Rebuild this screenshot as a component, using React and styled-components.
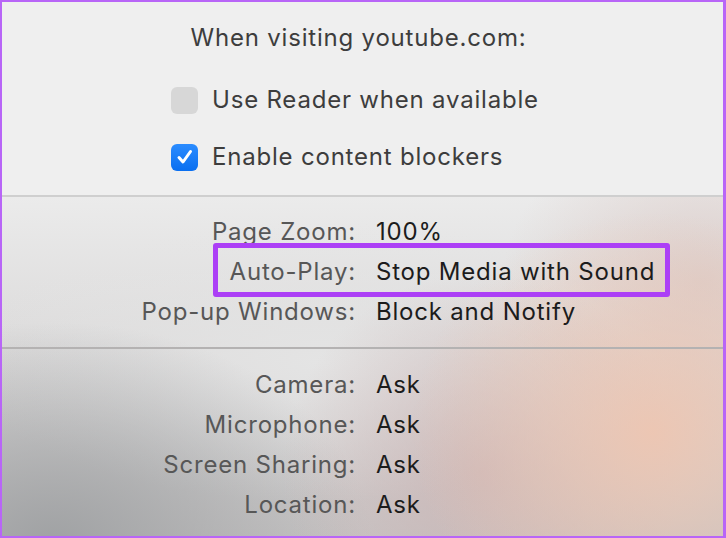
import React from "react";
import styled, { createGlobalStyle } from "styled-components";

const GlobalStyle = createGlobalStyle`
  html, body {
    margin: 0;
    padding: 0;
    background: #ffffff;
  }
  body {
    font-family: Inter, "Noto Sans", "Liberation Sans", sans-serif;
  }
`;

const Panel = styled.div`
  width: 726px;
  height: 538px;
  box-sizing: border-box;
  border: 2px solid #b865f7;
  border-right-width: 3px;
  display: flex;
  flex-direction: column;
  overflow: hidden;
  background:
    radial-gradient(ellipse 240px 220px at 650px 430px, rgba(238, 198, 178, 0.95), rgba(238, 198, 178, 0) 100%),
    radial-gradient(ellipse 200px 200px at 480px 470px, rgba(204, 180, 180, 0.8), rgba(204, 180, 180, 0) 100%),
    radial-gradient(ellipse 200px 160px at 700px 280px, rgba(218, 200, 196, 0.8), rgba(218, 200, 196, 0) 100%),
    radial-gradient(ellipse 320px 220px at 50px 540px, rgba(158, 160, 162, 0.95), rgba(158, 160, 162, 0) 100%),
    radial-gradient(ellipse 360px 140px at 320px 360px, rgba(228, 228, 228, 1), rgba(228, 228, 228, 0) 100%),
    linear-gradient(180deg, #efefef 0px, #ebebeb 195px, #dcdbdb 340px, #c6c4c4 538px);
`;

const Top = styled.div`
  background: #efefef;
  display: flex;
  flex-direction: column;
  align-items: center;
  padding-top: 21px;
  height: 193px;
  box-sizing: border-box;
`;

const Heading = styled.div`
  font-size: 24px;
  letter-spacing: 0.8px;
  color: #3d3d3d;
  line-height: 30px;
  margin-left: -8px;
`;

const Checks = styled.div`
  align-self: flex-start;
  display: flex;
  flex-direction: column;
  gap: 27px;
  margin-top: 32px;
  margin-left: 169px;
`;

const CheckRow = styled.label`
  display: flex;
  align-items: center;
  gap: 14px;
  font-size: 24px;
  letter-spacing: 0.8px;
  color: #3d3d3d;
  line-height: 30px;
`;

const Box = styled.span`
  width: 27px;
  height: 27px;
  border-radius: 6px;
  box-sizing: border-box;
  display: flex;
  align-items: center;
  justify-content: center;
  background: ${(p) => (p.$checked ? "linear-gradient(180deg, #2b8cff, #0a6ff0)" : "#d7d7d7")};
`;

const Divider = styled.div`
  height: 2px;
  background: ${(p) => p.$color || "#cfcfcf"};
  flex-shrink: 0;
`;

const Section = styled.div`
  padding-top: ${(p) => p.$top}px;
  padding-bottom: ${(p) => p.$bottom}px;
  display: flex;
  flex-direction: column;
`;

const Row = styled.div`
  position: relative;
  display: grid;
  grid-template-columns: 354px 1fr;
  column-gap: 20px;
  height: 40px;
  align-items: center;
  font-size: 24px;
  letter-spacing: 0.8px;
  line-height: 30px;

  ${(p) =>
    p.$highlight &&
    `
    &::after {
      content: "";
      position: absolute;
      left: 211px;
      top: -9px;
      width: 457px;
      height: 54px;
      box-sizing: border-box;
      border: 5px solid #ac3ff6;
      border-radius: 3px;
    }
  `}
`;

const Label = styled.span`
  text-align: right;
  color: #575757;
`;

const Value = styled.span`
  color: #1c1c1c;
`;

const CheckMark = () => (
  <svg width="20" height="20" viewBox="0 0 20 20">
    <path d="M4 10.5 L8 15 L15.5 4.5" fill="none" stroke="#ffffff" strokeWidth="3" strokeLinecap="round" strokeLinejoin="round" />
  </svg>
);

const general = [
  ["Page Zoom:", "100%"],
  ["Auto-Play:", "Stop Media with Sound", true],
  ["Pop-up Windows:", "Block and Notify"],
];

const devices = [
  ["Camera:", "Ask"],
  ["Microphone:", "Ask"],
  ["Screen Sharing:", "Ask"],
  ["Location:", "Ask"],
];

export default function App() {
  return (
    <>
      <GlobalStyle />
      <Panel>
        <Top>
          <Heading>When visiting youtube.com:</Heading>
          <Checks>
            <CheckRow>
              <Box />
              Use Reader when available
            </CheckRow>
            <CheckRow>
              <Box $checked>
                <CheckMark />
              </Box>
              Enable content blockers
            </CheckRow>
          </Checks>
        </Top>
        <Divider />
        <Section $top={15} $bottom={15}>
          {general.map(([l, v, h]) => (
            <Row key={l} $highlight={h}>
              <Label>{l}</Label>
              <Value>{v}</Value>
            </Row>
          ))}
        </Section>
        <Divider $color="#b4b2b2" />
        <Section $top={16} $bottom={0}>
          {devices.map(([l, v]) => (
            <Row key={l}>
              <Label>{l}</Label>
              <Value>{v}</Value>
            </Row>
          ))}
        </Section>
      </Panel>
    </>
  );
}
